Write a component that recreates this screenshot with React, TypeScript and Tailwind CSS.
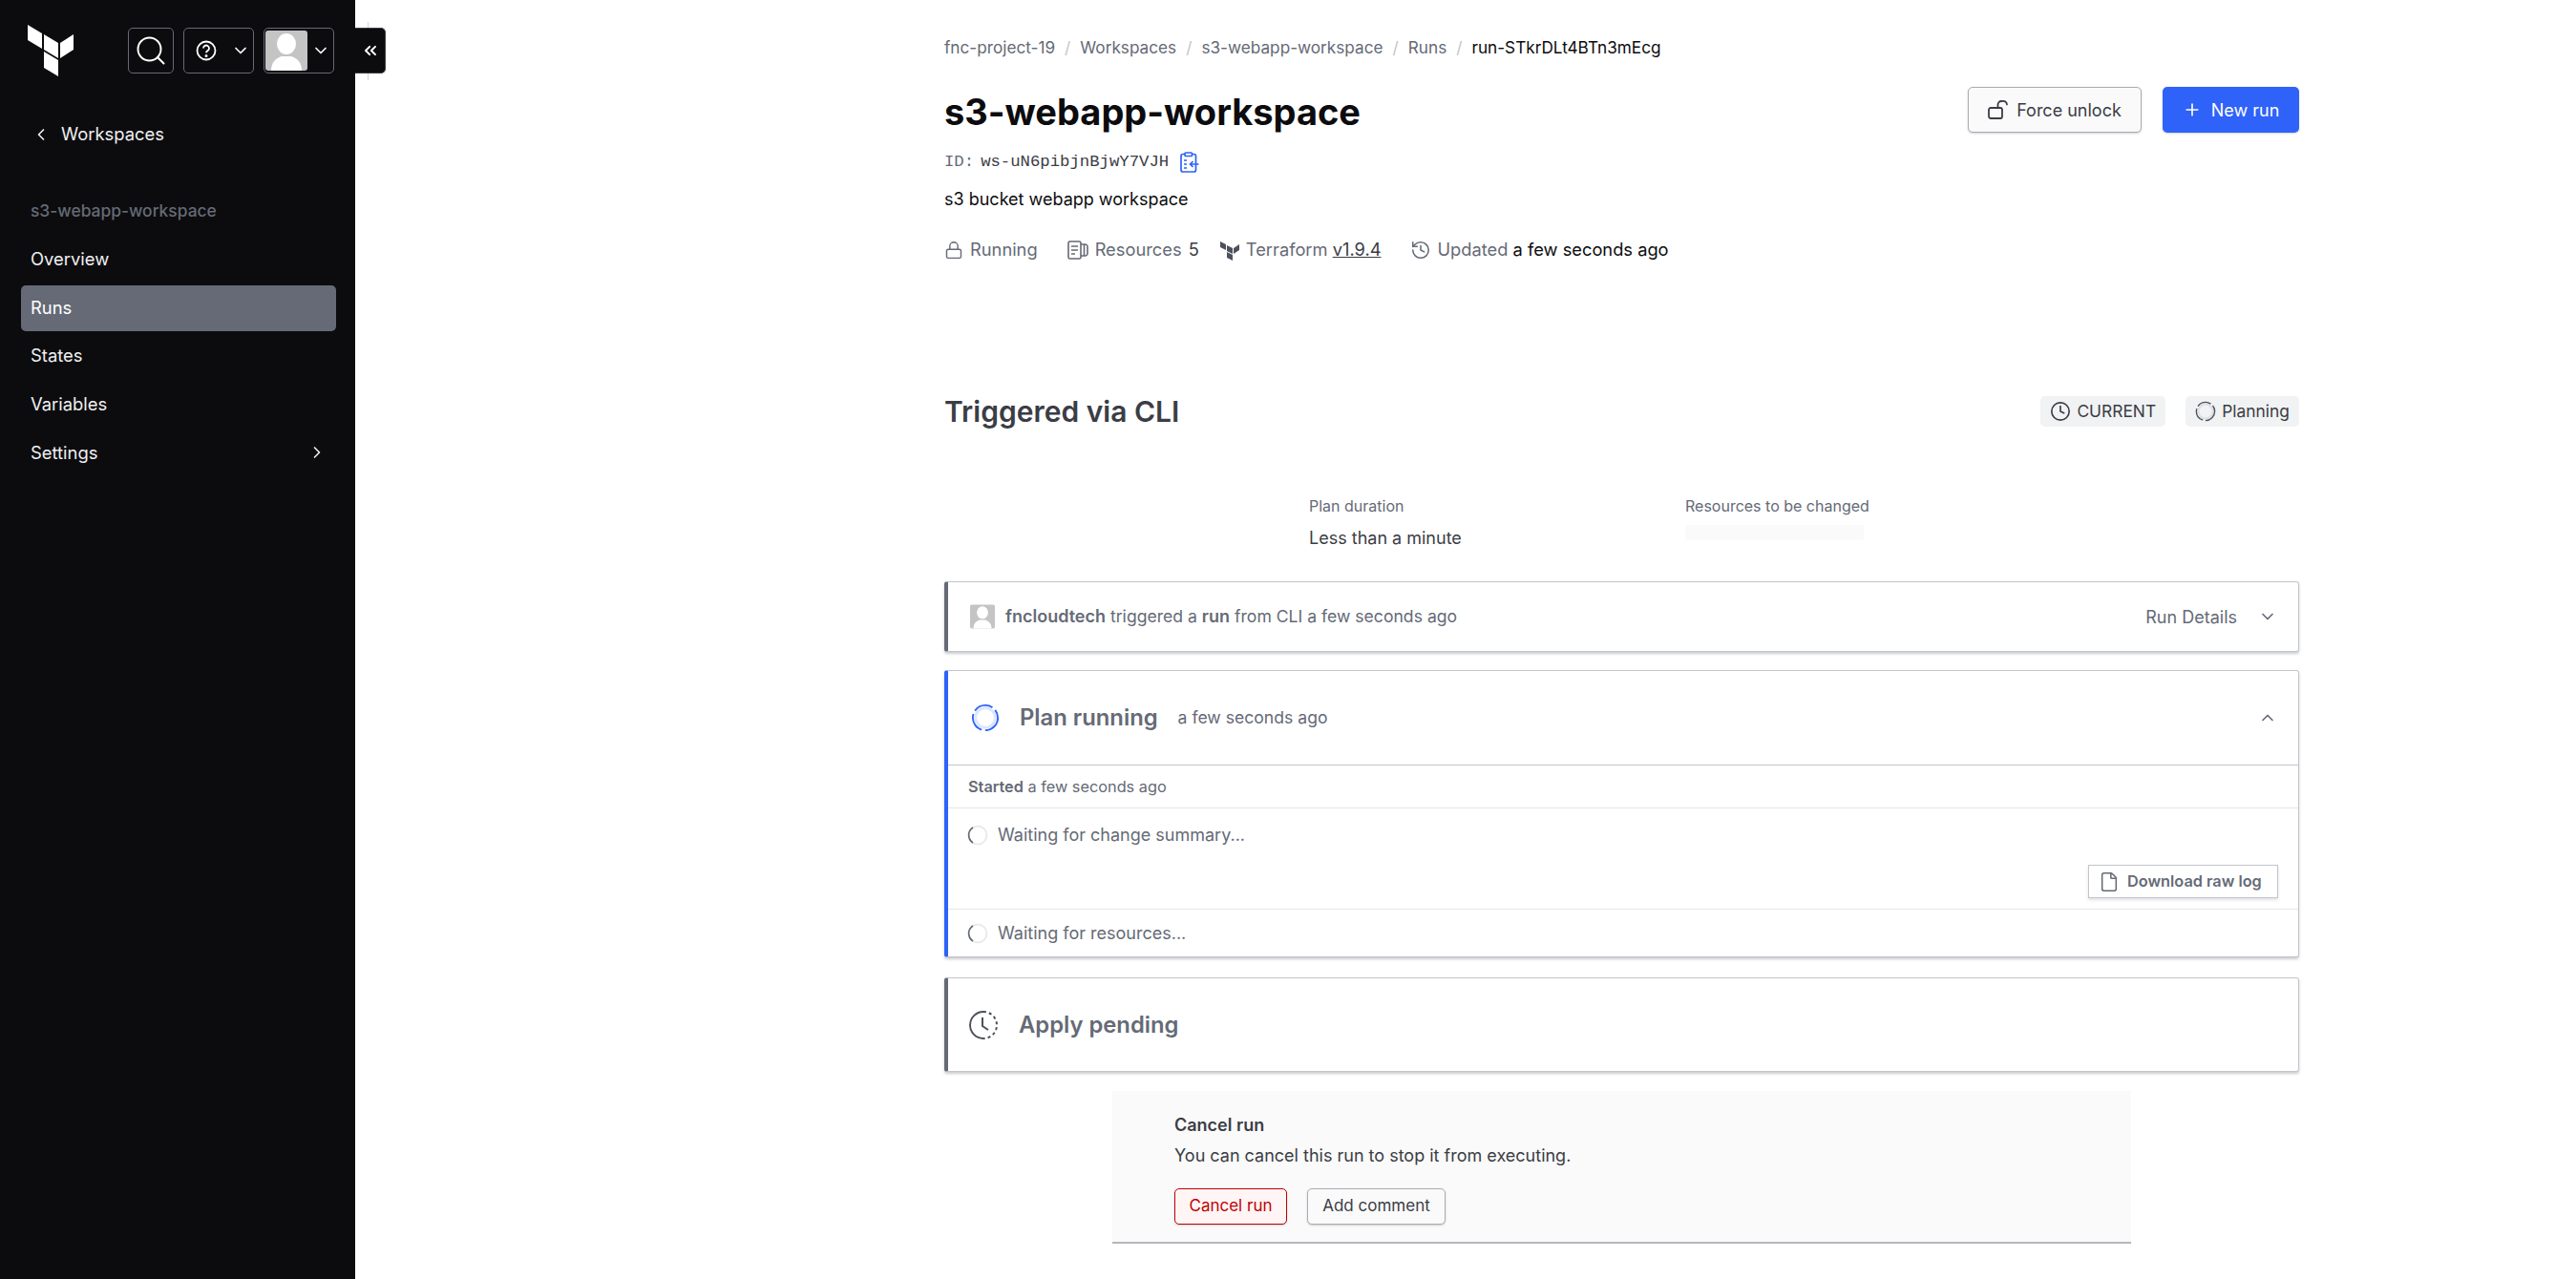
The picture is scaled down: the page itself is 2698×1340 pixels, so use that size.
import { ChevronDown, ChevronLeft, ChevronRight, ChevronUp, ChevronsLeft, Clock, File, History, Lock, Plus, Search } from 'lucide-react'

const font = { fontFamily: 'Inter, "Liberation Sans", sans-serif' }

function TerraformLogo({ className }: { className?: string }) {
  return (
    <svg viewBox="0 0 48 54" className={className} fill="currentColor">
      <polygon points="0,0 15,9 15,25 0,16" />
      <polygon points="17,10 32,19 32,35 17,26" />
      <polygon points="48,10 34,19 34,35 48,26" />
      <polygon points="17,28 32,37 32,54 17,45" />
    </svg>
  )
}

function Avatar({ className }: { className?: string }) {
  return (
    <svg viewBox="0 0 44 42" className={className}>
      <rect width="44" height="42" rx="3" fill="#c4c4c4" />
      <ellipse cx="22" cy="14" rx="10" ry="11" fill="#fff" />
      <path d="M6 42c0-9 5-13 11-15h10c6 2 11 6 11 15z" fill="#fff" />
    </svg>
  )
}

function Spinner({ size, color, ring }: { size: number; color: string; ring: string }) {
  return (
    <svg width={size} height={size} viewBox="0 0 32 32" fill="none">
      <circle cx="16" cy="16" r="11" stroke={ring} strokeWidth="3" />
      <circle cx="16" cy="16" r="14" stroke={color} strokeWidth="2" strokeDasharray="22 4" />
    </svg>
  )
}

function SmallSpinner() {
  return (
    <svg width="22" height="22" viewBox="0 0 22 22" fill="none">
      <circle cx="11" cy="11" r="9.5" stroke="#e5e6e9" strokeWidth="1.6" />
      <path d="M6 3a9.5 9.5 0 0 0 0 16" stroke="#656a76" strokeWidth="1.6" />
    </svg>
  )
}

function CopyIcon() {
  return (
    <svg width="20" height="22" viewBox="0 0 20 22" fill="none" stroke="#2e62f9" strokeWidth="1.7">
      <rect x="1" y="2.5" width="15.5" height="18.5" rx="2" />
      <rect x="5" y="1" width="7.5" height="3.5" rx="1" fill="#fff" />
      <path d="M4 9h3M4 13h3M4 17h3M19.5 13h-9M13.5 10l-3 3 3 3" />
    </svg>
  )
}

function ResourcesIcon() {
  return (
    <svg width="22" height="20" viewBox="0 0 22 20" fill="none" stroke="#656a76" strokeWidth="1.6">
      <rect x="1" y="1" width="13" height="18" rx="1.5" />
      <path d="M4 6h7M4 10h7M4 14h4M14 4h4.5a2.5 2.5 0 0 1 2.5 2.5v7a2.5 2.5 0 0 1-2.5 2.5H14M17.5 4v12" />
    </svg>
  )
}

function OpenLockIcon() {
  return (
    <svg width="22" height="20" viewBox="0 0 22 20" fill="none" stroke="#3b3d45" strokeWidth="1.8" strokeLinecap="round">
      <rect x="1" y="8" width="14" height="11" rx="2" />
      <path d="M10.5 8V4.5a3.5 3.5 0 0 1 3.5-3.5h1a4 4 0 0 1 5 3.5" />
    </svg>
  )
}

function DashedClock() {
  return (
    <svg width="32" height="32" viewBox="0 0 32 32" fill="none" stroke="#4c515c" strokeWidth="2">
      <path d="M16 2a14 14 0 0 0 0 28" />
      <path d="M16 2a14 14 0 0 1 0 28" strokeDasharray="3 3" />
      <path d="M15 8v9l6 4" />
    </svg>
  )
}

function SidebarItem({ label, active, chevron }: { label: string; active?: boolean; chevron?: boolean }) {
  return (
    <div className={`flex h-[48px] items-center justify-between rounded-[5px] px-[10px] text-[18.4px] ${active ? 'bg-[#656a76] text-white' : 'text-[#efeff1]'}`}>
      <span>{label}</span>
      {chevron && <ChevronRight size={20} className="text-[#efeff1]" />}
    </div>
  )
}

function Sidebar() {
  return (
    <aside className="relative w-[372px] shrink-0 bg-[#0c0c0e] text-white">
      <div className="flex items-start pl-[29px] pt-[26px]">
        <TerraformLogo className="h-[54px] w-[48px] text-white" />
        <div className="ml-[57px] mt-[3px] flex gap-[10px]">
          <div className="flex h-[48px] w-[48px] items-center justify-center rounded-[5px] border border-[#656a76]">
            <Search size={36} strokeWidth={1.3} />
          </div>
          <div className="flex h-[48px] w-[74px] items-center justify-between rounded-[5px] border border-[#656a76] pl-[12px] pr-[3px]">
            <svg width="22" height="22" viewBox="0 0 22 22" fill="none" stroke="currentColor" strokeWidth="1.8">
              <circle cx="11" cy="11" r="9.5" />
              <path d="M8 8.5a3 3 0 1 1 4.5 2.6c-1 .6-1.5 1.1-1.5 2.2" />
              <circle cx="11" cy="16.5" r=".6" />
            </svg>
            <ChevronDown size={20} />
          </div>
          <div className="flex h-[48px] w-[74px] items-center justify-between rounded-[5px] border border-[#656a76] pl-[1px] pr-[3px]">
            <Avatar className="h-[42px] w-[44px]" />
            <ChevronDown size={20} />
          </div>
        </div>
      </div>
      <div className="absolute left-[385px] top-[23px] h-[61px] w-px bg-[#d5d6da]" />
      <div className="absolute left-full top-[29px] flex h-[48px] w-[32px] items-center justify-center rounded-r-[5px] border border-l-0 border-[#3b3d45] bg-[#0c0c0e]">
        <ChevronsLeft size={20} strokeWidth={2.4} />
      </div>
      <div className="mt-[49px] flex h-[24px] items-center gap-[11px] pl-[33px] text-[18.4px] text-[#efeff1]">
        <ChevronLeft size={20} />
        <span>Workspaces</span>
      </div>
      <div className="mt-[58px] pl-[32px] text-[17.4px] leading-[20px] font-medium text-[#656a76]">s3-webapp-workspace</div>
      <nav className="mt-[17px] flex flex-col gap-[2.6px] pl-[22px] pr-[20px]">
        <SidebarItem label="Overview" />
        <SidebarItem label="Runs" active />
        <SidebarItem label="States" />
        <SidebarItem label="Variables" />
        <SidebarItem label="Settings" chevron />
      </nav>
    </aside>
  )
}

function Crumb({ label }: { label: string }) {
  return (
    <>
      <span>{label}</span>
      <span className="text-[#c2c5cb]">/</span>
    </>
  )
}

function PageHeader() {
  return (
    <>
      <div className="flex h-[20px] items-center gap-[10px] text-[17.2px] text-[#656a76]">
        <Crumb label="fnc-project-19" />
        <Crumb label="Workspaces" />
        <Crumb label="s3-webapp-workspace" />
        <Crumb label="Runs" />
        <span className="text-[#0c0c0e]">run-STkrDLt4BTn3mEcg</span>
      </div>
      <div className="mt-[31px] flex h-[50px] items-start justify-between">
        <h1 className="pt-[2px] text-[38px] leading-[48px] font-bold text-[#0c0c0e]">s3-webapp-workspace</h1>
        <div className="flex gap-[22px]">
          <div className="flex h-[48px] w-[182px] items-center justify-center gap-[8px] rounded-[5px] border border-[#a9acb3] bg-[#fafafa] text-[18px] text-[#3b3d45] shadow-[0_1px_2px_rgba(101,106,118,0.3)]">
            <OpenLockIcon />
            Force unlock
          </div>
          <div className="flex h-[48px] w-[143px] items-center justify-center gap-[10px] rounded-[5px] bg-[#2e62f9] text-[18px] text-white shadow-[0_1px_2px_rgba(101,106,118,0.3)]">
            <Plus size={20} />
            New run
          </div>
        </div>
      </div>
      <div className="mt-[17px] flex h-[24px] items-center text-[17.3px]">
        <span className="font-['Liberation_Mono',monospace] text-[#656a76]">ID:</span>
        <span className="ml-[7px] font-['Liberation_Mono',monospace] text-[#3b3d45]">ws-uN6pibjnBjwY7VJH</span>
        <span className="ml-[12px] flex"><CopyIcon /></span>
      </div>
      <p className="mt-[15px] text-[18px] leading-[24px] text-[#0c0c0e]">s3 bucket webapp workspace</p>
      <div className="mt-[29px] flex h-[24px] items-center text-[18.3px] text-[#656a76]">
        <Lock size={20} strokeWidth={1.7} />
        <span className="ml-[7px]">Running</span>
        <span className="ml-[31px] flex"><ResourcesIcon /></span>
        <span className="ml-[7px]">Resources <span className="ml-[2px] text-[#3b3d45]">5</span></span>
        <span className="ml-[22px] flex">
          <svg width="20" height="22" viewBox="0 0 20 22" fill="#4c515c">
            <polygon points="0,2 6,5 6,11 0,8" />
            <polygon points="7,6 13,9 13,15 7,12" />
            <polygon points="20,5 14,9 14,15 20,11" />
            <polygon points="7,13 13,16 13,22 7,19" />
          </svg>
        </span>
        <span className="ml-[7px]">Terraform <span className="text-[#3b3d45] underline">v1.9.4</span></span>
        <History size={22} strokeWidth={1.7} className="ml-[30px]" />
        <span className="ml-[7px]">Updated <span className="text-[#0c0c0e]">a few seconds ago</span></span>
      </div>
    </>
  )
}

function Badge({ icon, label }: { icon: React.ReactNode; label: string }) {
  return (
    <div className="flex h-[32px] items-center gap-[6px] rounded-[5px] bg-[#f1f2f3] px-[10px] text-[17.4px] text-[#3b3d45]">
      {icon}
      {label}
    </div>
  )
}

function Card({ accent, className, children }: { accent: string; className?: string; children: React.ReactNode }) {
  return (
    <section className={`rounded-[3px] border border-l-4 border-[#c2c5cb] bg-white shadow-[0_2px_3px_rgba(101,106,118,0.35)] ${accent} ${className ?? ''}`}>
      {children}
    </section>
  )
}

function RunContent() {
  return (
    <>
      <div className="mt-[133px] flex h-[48px] items-center justify-between">
        <h2 className="text-[30px] font-semibold text-[#3b3d45]">Triggered via CLI</h2>
        <div className="flex gap-[21px]">
          <Badge icon={<Clock size={22} strokeWidth={1.8} />} label="CURRENT" />
          <Badge icon={<Spinner size={22} color="#4c515c" ring="#dedfe3" />} label="Planning" />
        </div>
      </div>
      <div className="mt-[65px] flex pl-[382px]">
        <div className="w-[394px]">
          <div className="text-[16px] leading-[20px] text-[#656a76]">Plan duration</div>
          <div className="mt-[12px] text-[18px] leading-[24px] text-[#3b3d45]">Less than a minute</div>
        </div>
        <div>
          <div className="text-[16px] leading-[20px] text-[#656a76]">Resources to be changed</div>
          <div className="mt-[10px] h-[16px] w-[187px] bg-[#fafafa]" />
        </div>
      </div>
      <Card accent="border-l-[#656a76]" className="mt-[33px]">
        <div className="flex h-[72px] items-center justify-between pl-[23px] pr-[22px] text-[17.6px] text-[#656a76]">
          <div className="flex items-center gap-[11px]">
            <Avatar className="h-[26px] w-[26px]" />
            <span><b className="text-[18px] font-semibold">fncloudtech</b> triggered a <b className="text-[18px] font-semibold">run</b> from CLI a few seconds ago</span>
          </div>
          <div className="flex items-center gap-[22px] text-[18px]">
            Run Details
            <ChevronDown size={20} />
          </div>
        </div>
      </Card>
      <Card accent="border-l-[#2e62f9]" className="mt-[19px]">
        <div className="flex h-[99px] items-center justify-between border-b border-[#c2c5cb] pl-[24px] pr-[22px]">
          <div className="flex items-center">
            <Spinner size={30} color="#2e62f9" ring="#dde6fe" />
            <span className="ml-[21px] text-[23.8px] font-semibold text-[#656a76]">Plan running</span>
            <span className="ml-[21px] text-[17.6px] text-[#656a76]">a few seconds ago</span>
          </div>
          <ChevronUp size={20} className="text-[#656a76]" />
        </div>
        <div className="flex h-[45px] items-center border-b border-[#e5e6e9] pl-[21px] text-[16.3px] text-[#656a76]">
          <span><b className="font-semibold">Started</b> a few seconds ago</span>
        </div>
        <div className="relative h-[106px] border-b border-[#e5e6e9]">
          <div className="flex items-center gap-[10px] pl-[20px] pt-[14px] text-[18px] text-[#656a76]">
            <SmallSpinner />
            Waiting for change summary...
          </div>
          <div className="absolute bottom-[11px] right-[21px] flex h-[35px] w-[199px] items-center gap-[8px] border border-[#c2c5cb] pl-[10px] text-[16.3px] font-semibold text-[#656a76] shadow-[0_2px_3px_rgba(101,106,118,0.2)]">
            <File size={22} strokeWidth={1.7} />
            Download raw log
          </div>
        </div>
        <div className="flex h-[49px] items-center gap-[10px] pl-[20px] text-[18px] text-[#656a76]">
          <SmallSpinner />
          Waiting for resources...
        </div>
      </Card>
      <Card accent="border-l-[#656a76]" className="mt-[21px]">
        <div className="flex h-[97px] items-center pl-[21px]">
          <DashedClock />
          <span className="ml-[21px] text-[23.8px] font-semibold text-[#656a76]">Apply pending</span>
        </div>
      </Card>
      <div className="mx-[176px] mt-[20px] h-[160px] border-b-2 border-[#b5b7bd] bg-[#fafafa] pl-[65px] pt-[24px]">
        <div className="text-[18px] leading-[24px] font-semibold text-[#3b3d45]">Cancel run</div>
        <p className="mt-[8px] text-[18px] leading-[24px] text-[#3b3d45]">You can cancel this run to stop it from executing.</p>
        <div className="mt-[22px] flex gap-[21px]">
          <div className="flex h-[38px] w-[118px] items-center justify-center rounded-[5px] border border-[#c00005] bg-[#fff5f5] text-[17px] text-[#c00005] shadow-[0_1px_2px_rgba(101,106,118,0.3)]">Cancel run</div>
          <div className="flex h-[38px] w-[145px] items-center justify-center rounded-[5px] border border-[#a9acb3] bg-[#fafafa] text-[17px] text-[#3b3d45] shadow-[0_1px_2px_rgba(101,106,118,0.3)]">Add comment</div>
        </div>
      </div>
    </>
  )
}

export default function App() {
  return (
    <div style={font} className="flex h-[1340px] w-[2698px] overflow-hidden bg-white">
      <Sidebar />
      <main className="ml-[617px] w-[1419px] pt-[40px]">
        <PageHeader />
        <RunContent />
      </main>
    </div>
  )
}
